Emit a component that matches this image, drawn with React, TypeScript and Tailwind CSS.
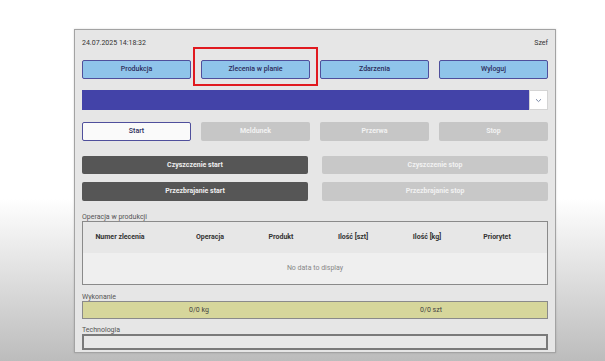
import React from 'react';

const NAV = ['Produkcja', 'Zlecenia w planie', 'Zdarzenia', 'Wyloguj'];
const ACTIONS = ['Meldunek', 'Przerwa', 'Stop'];
const COLUMNS = ['Numer zlecenia', 'Operacja', 'Produkt', 'Ilość [szt]', 'Ilość [kg]', 'Priorytet'];

const App: React.FC = () => {
    return (
        <div className="w-[605px] h-[361px] overflow-hidden bg-[linear-gradient(180deg,#ffffff_0%,#ffffff_55%,#bcbcbc_100%)] pt-[29px] pl-[74px] font-['Roboto',sans-serif]">
            <div className="w-[482px] h-[324px] border border-[#a3a3a3] bg-[#e6e6e6] px-[7px] shadow-[0_0_2px_rgba(0,0,0,0.15)]">
                <div className="mt-[8px] h-[10px] flex items-center justify-between text-[7px] text-[#333]">
                    <span>24.07.2025 14:18:32</span>
                    <span>Szef</span>
                </div>

                <div className="mt-[12px] grid grid-cols-4 gap-[10px]">
                    {NAV.map((label) => (
                        <div key={label} className="relative">
                            <div className="h-[19px] rounded-[2px] border border-[#4f4f9c] bg-[#8fc4ea] flex items-center justify-center text-[7px] font-medium text-[#2c2c5a]">
                                {label}
                            </div>
                            {label === 'Zlecenia w planie' && (
                                <div className="absolute -left-[8px] -right-[8px] -top-[13px] -bottom-[7px] border-2 border-[#e0191f]" />
                            )}
                        </div>
                    ))}
                </div>

                <div className="mt-[11px] h-[20px] flex">
                    <div className="flex-1 bg-[#4343a8]" />
                    <div className="w-[19px] bg-white border border-[#d4d4d4] flex items-center justify-center">
                        <svg width="7" height="5" viewBox="0 0 7 5" fill="none">
                            <path d="M1 1.2 L3.5 3.6 L6 1.2" stroke="#7b8aa8" strokeWidth="1" />
                        </svg>
                    </div>
                </div>

                <div className="mt-[12px] grid grid-cols-4 gap-[10px]">
                    <div className="h-[19px] rounded-[2px] border border-[#4f4f9c] bg-[#fafafa] flex items-center justify-center text-[7px] font-medium text-[#2c2c5a]">
                        Start
                    </div>
                    {ACTIONS.map((label) => (
                        <div key={label} className="h-[19px] rounded-[2px] bg-[#c6c6c6] flex items-center justify-center text-[7px] font-bold text-[#f2f2f2]">
                            {label}
                        </div>
                    ))}
                </div>

                <div className="mt-[15px] grid grid-cols-2 gap-[14px]">
                    <div className="h-[18px] rounded-[2px] bg-[#565656] flex items-center justify-center text-[7px] font-bold text-[#eeeeee]">
                        Czyszczenie start
                    </div>
                    <div className="h-[18px] rounded-[2px] bg-[#c8c8c8] flex items-center justify-center text-[7px] font-bold text-[#f2f2f2]">
                        Czyszczenie stop
                    </div>
                </div>
                <div className="mt-[8px] grid grid-cols-2 gap-[14px]">
                    <div className="h-[19px] rounded-[2px] bg-[#565656] flex items-center justify-center text-[7px] font-bold text-[#eeeeee]">
                        Przezbrajanie start
                    </div>
                    <div className="h-[19px] rounded-[2px] bg-[#c8c8c8] flex items-center justify-center text-[7px] font-bold text-[#f2f2f2]">
                        Przezbrajanie stop
                    </div>
                </div>

                <div className="mt-[10px] h-[10px] flex items-end text-[7px] leading-none text-[#555]">Operacja w produkcji</div>
                <div className="h-[64px] border border-[#8a8a8a] bg-[#efefef] flex flex-col">
                    <div className="h-[31px] bg-[#e7e7e7] grid grid-cols-[74px_106px_36px_108px_40px_1fr] items-center text-[7px] font-bold text-[#333]">
                        {COLUMNS.map((c) => (
                            <span key={c} className="text-center whitespace-nowrap">{c}</span>
                        ))}
                    </div>
                    <div className="flex-1 flex items-center justify-center text-[7px] text-[#888]">No data to display</div>
                </div>

                <div className="mt-[8px] h-[8px] flex items-end text-[7px] leading-none text-[#555]">Wykonanie</div>
                <div className="h-[18px] border border-[#8a8a8a] bg-[#d6d69b] grid grid-cols-2 items-center text-[7px] text-[#444]">
                    <span className="text-center">0/0 kg</span>
                    <span className="text-center">0/0 szt</span>
                </div>

                <div className="mt-[6px] h-[9px] flex items-end text-[7px] leading-none text-[#555]">Technologia</div>
                <div className="h-[16px] border-2 border-[#7a7a7a] bg-[#e8e8e8]" />
            </div>
        </div>
    );
};

export default App;
